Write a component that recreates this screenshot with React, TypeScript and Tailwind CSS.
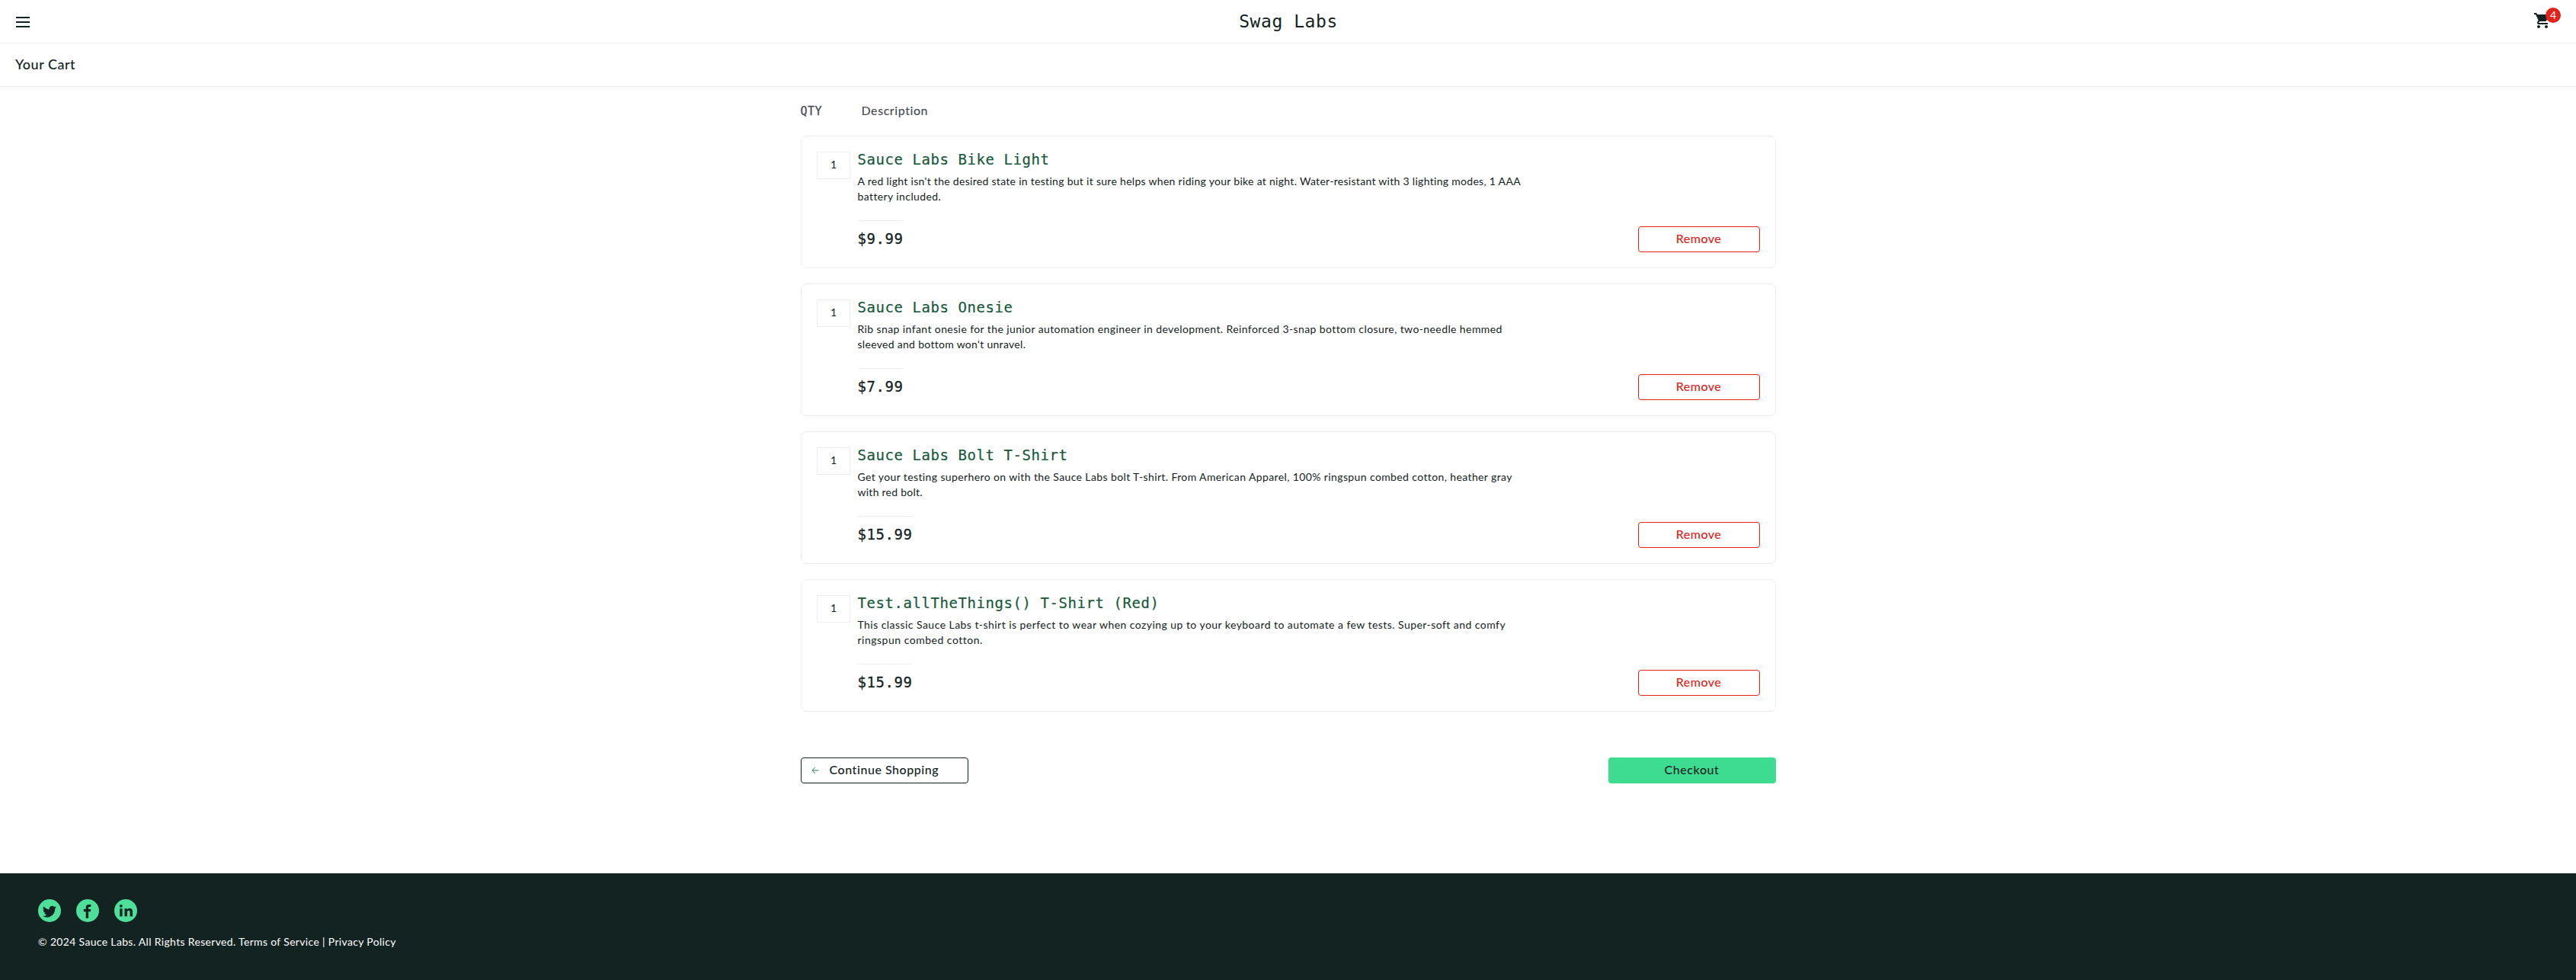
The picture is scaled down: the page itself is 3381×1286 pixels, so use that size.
import React from "react";
import { MdShoppingCart } from "react-icons/md";

const items = [
  {
    name: "Sauce Labs Bike Light",
    lines: [
      ["A red light isn't the desired state in testing but it sure helps when riding your bike at night. Water-resistant with 3 lighting modes, 1 AAA", "tracking-[0.295px]"],
      ["battery included.", "tracking-[0.4px]"],
    ],
    price: "$9.99",
  },
  {
    name: "Sauce Labs Onesie",
    lines: [
      ["Rib snap infant onesie for the junior automation engineer in development. Reinforced 3-snap bottom closure, two-needle hemmed", "tracking-[0.4px]"],
      ["sleeved and bottom won't unravel.", "tracking-[0.3px]"],
    ],
    price: "$7.99",
  },
  {
    name: "Sauce Labs Bolt T-Shirt",
    lines: [
      ["Get your testing superhero on with the Sauce Labs bolt T-shirt. From American Apparel, 100% ringspun combed cotton, heather gray", "tracking-[0.385px]"],
      ["with red bolt.", "tracking-[0.25px]"],
    ],
    price: "$15.99",
  },
  {
    name: "Test.allTheThings() T-Shirt (Red)",
    lines: [
      ["This classic Sauce Labs t-shirt is perfect to wear when cozying up to your keyboard to automate a few tests. Super-soft and comfy", "tracking-[0.45px]"],
      ["ringspun combed cotton.", "tracking-[0.5px]"],
    ],
    price: "$15.99",
  },
];

function Header() {
  return (
    <header>
      <div className="flex h-[57px] items-center justify-between border-b border-[#ededed] pl-[21px] pr-5">
        <button className="mt-0.5 flex w-[140px] flex-col gap-1" aria-label="Open Menu">
          <span className="h-0.5 w-[18px] bg-[#132322]" />
          <span className="h-0.5 w-[18px] bg-[#132322]" />
          <span className="h-0.5 w-[18px] bg-[#132322]" />
        </button>
        <div className="font-['DejaVu_Sans_Mono',monospace] text-[23px] leading-8 tracking-[0.55px]">Swag Labs</div>
        <div className="flex w-[140px] justify-end">
          <div className="relative h-10 w-10">
            <MdShoppingCart className="absolute left-1 top-[7px] size-6" />
            <span className="absolute right-0 top-0.5 flex size-5 items-center justify-center rounded-full bg-[#e2231a] pb-px text-sm leading-none text-white">4</span>
          </div>
        </div>
      </div>
      <div className="flex h-[57px] items-center border-b border-[#ededed] px-5 pb-0.5 text-lg font-medium tracking-[0.5px]">Your Cart</div>
    </header>
  );
}

function CartItem({ item }: { item: (typeof items)[number] }) {
  return (
    <div className="flex h-[174px] gap-2.5 rounded-lg border border-[#ededed] p-5">
      <div className="flex h-9 w-11 items-center justify-center border border-[#ededed] pb-[3px] pl-px text-sm">1</div>
      <div className="flex flex-1 flex-col">
        <div className="-mt-0.5 font-['DejaVu_Sans_Mono',monospace] text-[19px] leading-6 tracking-[0.56px] text-[#18583a] [-webkit-text-stroke:0.2px]">{item.name}</div>
        <div className="mt-[7px] text-sm leading-5">
          {item.lines.map(([text, tracking]) => (
            <div key={text}>
              <span className={tracking}>{text}</span>
            </div>
          ))}
        </div>
        <div className="mt-auto flex items-end justify-between">
          <div className="mb-[7px] border-t border-[#ededed] pt-3 font-['DejaVu_Sans_Mono',monospace] text-[19px] leading-[22px] tracking-[0.56px] [-webkit-text-stroke:0.3px]">{item.price}</div>
          <button className="h-[34px] w-40 rounded border border-[#e2231a] pb-0.5 text-base font-medium tracking-[0.5px] text-[#e2231a]">Remove</button>
        </div>
      </div>
    </div>
  );
}

function Footer() {
  return (
    <footer className="h-[140px] bg-[#132322] px-[50px] pt-[34px] text-white">
      <div className="flex gap-5">
        <svg viewBox="0 0 30 30" className="size-[30px]">
          <circle cx="15" cy="15" r="15" fill="#4ee09a" />
          <path transform="translate(6.3 6.900) scale(.75)" fill="#132322" d="M23.6 4.9a9.7 9.7 0 0 1-2.8.8 4.9 4.9 0 0 0 2.1-2.7 9.8 9.8 0 0 1-3.1 1.2 4.9 4.9 0 0 0-8.4 4.5A13.9 13.9 0 0 1 1.3 3.6a4.9 4.9 0 0 0 1.5 6.6 4.9 4.9 0 0 1-2.2-.6 4.9 4.9 0 0 0 3.9 4.9 4.9 4.9 0 0 1-2.2.1 4.9 4.9 0 0 0 4.6 3.4A9.9 9.9 0 0 1-.3 20 13.9 13.9 0 0 0 21.1 7.500a10 10 0 0 0 2.500-2.600z" />
        </svg>
        <svg viewBox="0 0 30 30" className="size-[30px]">
          <circle cx="15" cy="15" r="15" fill="#4ee09a" />
          <path fill="#132322" d="M12.700 25V16.300H9.800V13h2.900v-2.300C12.700 8 14.400 7 16.600 7h2.700v3h-1.900c-1.100 0-1.300.6-1.300 1.300V13h3.200l-.4 3.300h-2.800V25z" />
        </svg>
        <svg viewBox="0 0 30 30" className="size-[30px]">
          <circle cx="15" cy="15" r="15" fill="#4ee09a" />
          <path fill="#132322" d="M7.200 12.200h3.400V22.500H7.200zM13.500 12.200h3.300V13.600c.6-1 1.700-1.700 3.200-1.700 3 0 4 1.900 4 4.600v6h-3.400v-5.300c0-1.400-.3-2.400-1.600-2.400s-2 1-2 2.400v5.300H13.500z" />
          <circle cx="8.900" cy="8.800" r="1.900" fill="#132322" />
        </svg>
      </div>
      <div className="mt-4 text-sm leading-5 tracking-[0.33px]">© 2024 Sauce Labs. All Rights Reserved. Terms of Service | Privacy Policy</div>
    </footer>
  );
}

export default function App() {
  return (
    <div className="flex min-h-screen flex-col bg-white font-['Lato',sans-serif] text-[#132322]">
      <Header />
      <main className="mx-auto w-[1280px] flex-1">
        <div className="flex h-16 items-center text-base font-medium text-[#484c55]">
          <span className="w-20 font-['DejaVu_Sans_Mono',monospace] text-[15px] font-normal tracking-[0.5px] [-webkit-text-stroke:0.3px]">QTY</span>
          <span className="pb-0.5 tracking-[0.55px]">Description</span>
        </div>
        <div className="flex flex-col gap-5">
          {items.map((item) => (
            <CartItem key={item.name} item={item} />
          ))}
        </div>
        <div className="mt-[60px] flex justify-between">
          <button className="flex h-[34px] w-[220px] items-center rounded border border-[#132322] pb-0.5 pl-[13px] text-base font-medium tracking-[0.55px]">
            <svg viewBox="0 0 10 10" className="mr-[14px] mt-px size-2.5" fill="none" stroke="#18824c" strokeWidth="1">
              <path d="M9.500 5H1M4.800 1L.8 5l4 4" />
            </svg>
            Continue Shopping
          </button>
          <button className="h-[34px] w-[220px] rounded bg-[#3ddc91] pb-0.5 text-base font-medium tracking-[0.55px]">Checkout</button>
        </div>
      </main>
      <Footer />
    </div>
  );
}
